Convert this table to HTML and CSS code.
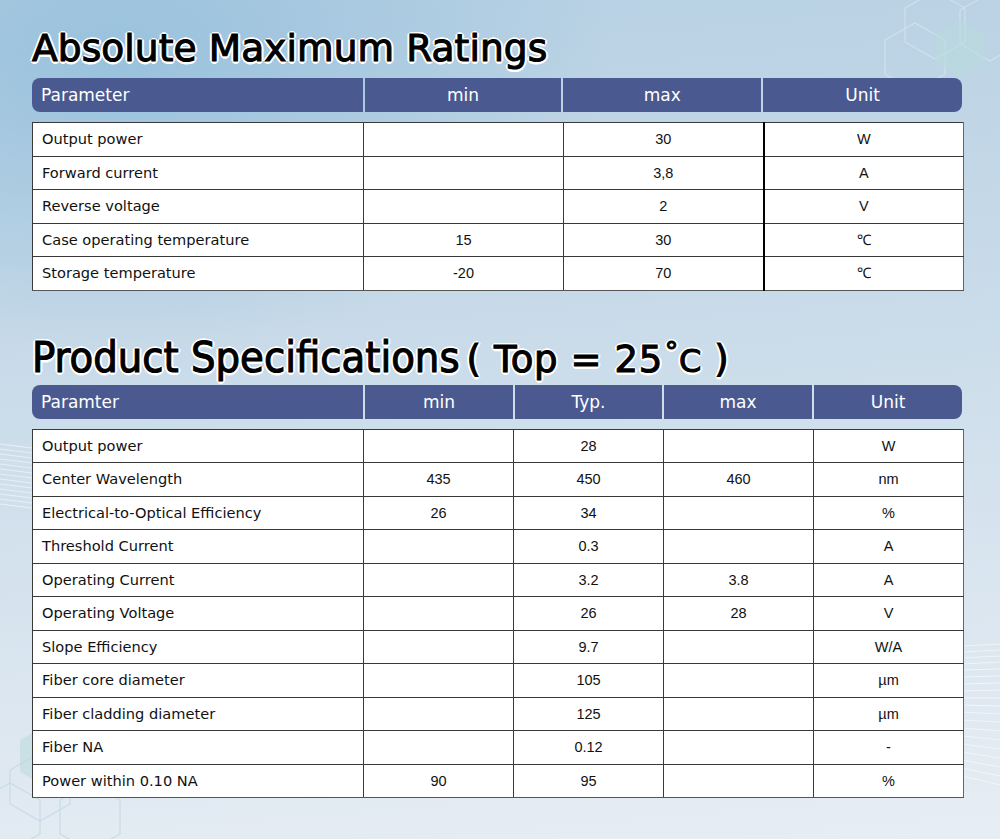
FILE: index.html
```html
<!DOCTYPE html>
<html>
<head>
<meta charset="utf-8">
<link rel="stylesheet" href="styles.css">
</head>
<body>
<svg class="deco" width="1000" height="839" viewBox="0 0 1000 839" aria-hidden="true">
  <g fill="none" stroke="#d5e5ed" stroke-width="1.1" opacity="0.85">
    <polygon points="905,8 935,-9 965,8 965,42 935,59 905,42"/>
    <polygon points="960,10 990,-7 1020,10 1020,44 990,61 960,44"/>
    <polygon points="885,40 915,23 945,40 945,74 915,91 885,74"/>
  </g>
  <g fill="none" stroke="#c5dbe4" stroke-width="1.2" opacity="0.9">
    <polygon points="10,770 40,753 70,770 70,804 40,821 10,804"/>
    <polygon points="60,800 90,783 120,800 120,834 90,851 60,834"/>
    <polygon points="-20,800 10,783 40,800 40,834 10,851 -20,834"/>
  </g>
  <polygon points="935,34 960,20 985,34 985,62 960,76 935,62" fill="#b8dadc" opacity="0.55"/>
  <polygon points="20,740 48,724 76,740 76,772 48,788 20,772" fill="#b4d8d8" opacity="0.45"/>
  <g stroke="#ffffff" stroke-width="1" opacity="0.55">
    <line x1="0" y1="444" x2="32" y2="448"/>
    <line x1="0" y1="449" x2="32" y2="453"/>
    <line x1="0" y1="454" x2="32" y2="458"/>
    <line x1="0" y1="459" x2="32" y2="463"/>
    <line x1="0" y1="464" x2="32" y2="468"/>
    <line x1="0" y1="469" x2="32" y2="473"/>
    <line x1="0" y1="474" x2="32" y2="478"/>
    <line x1="0" y1="479" x2="32" y2="483"/>
    <line x1="0" y1="484" x2="32" y2="488"/>
    <line x1="0" y1="489" x2="32" y2="493"/>
    <line x1="0" y1="494" x2="32" y2="498"/>
    <line x1="0" y1="499" x2="32" y2="503"/>
    <line x1="0" y1="504" x2="32" y2="508"/>
    <line x1="962" y1="646" x2="1000" y2="644"/>
    <line x1="962" y1="652" x2="1000" y2="650"/>
    <line x1="962" y1="658" x2="1000" y2="656"/>
    <line x1="962" y1="664" x2="1000" y2="662"/>
    <line x1="962" y1="670" x2="1000" y2="669"/>
    <line x1="962" y1="677" x2="1000" y2="676"/>
    <line x1="962" y1="684" x2="1000" y2="683"/>
    <line x1="962" y1="691" x2="1000" y2="690"/>
    <line x1="962" y1="698" x2="1000" y2="698"/>
    <line x1="962" y1="705" x2="1000" y2="706"/>
    <line x1="962" y1="712" x2="1000" y2="714"/>
    <line x1="962" y1="720" x2="1000" y2="722"/>
    <line x1="962" y1="728" x2="1000" y2="731"/>
    <line x1="962" y1="736" x2="1000" y2="740"/>
    <line x1="962" y1="744" x2="1000" y2="749"/>
    <line x1="962" y1="752" x2="1000" y2="758"/>
    <line x1="962" y1="760" x2="1000" y2="767"/>
    <line x1="962" y1="768" x2="1000" y2="776"/>
    <line x1="962" y1="776" x2="1000" y2="785"/>
  </g>
</svg>

<main class="page">
  <h1 class="title title-1">Absolute Maximum Ratings</h1>

  <div class="head head-4">
    <div class="hc hc-left">Parameter</div>
    <div class="hc">min</div>
    <div class="hc">max</div>
    <div class="hc hc-right">Unit</div>
  </div>

  <table class="grid grid-4">
    <colgroup><col class="c-param"><col class="c4"><col class="c4"><col class="c4"></colgroup>
    <tr><td>Output power</td><td></td><td class="num">30</td><td class="num unit-sep">W</td></tr>
    <tr><td>Forward current</td><td></td><td class="num">3,8</td><td class="num unit-sep">A</td></tr>
    <tr><td>Reverse voltage</td><td></td><td class="num">2</td><td class="num unit-sep">V</td></tr>
    <tr><td>Case operating temperature</td><td class="num">15</td><td class="num">30</td><td class="num unit-sep">℃</td></tr>
    <tr><td>Storage temperature</td><td class="num">-20</td><td class="num">70</td><td class="num unit-sep">℃</td></tr>
  </table>

  <h1 class="title title-2"><span class="cond">Product Specifications</span><span class="wide">( Top = 25<span class="deg">°</span><span class="cee">C</span> )</span></h1>

  <div class="head head-5">
    <div class="hc hc-left">Paramter</div>
    <div class="hc">min</div>
    <div class="hc">Typ.</div>
    <div class="hc">max</div>
    <div class="hc hc-right">Unit</div>
  </div>

  <table class="grid grid-5">
    <colgroup><col class="c-param"><col class="c5a"><col class="c5b"><col class="c5a"><col class="c5b"></colgroup>
    <tr><td>Output power</td><td></td><td class="num">28</td><td></td><td class="num">W</td></tr>
    <tr><td>Center Wavelength</td><td class="num">435</td><td class="num">450</td><td class="num">460</td><td class="num">nm</td></tr>
    <tr><td>Electrical-to-Optical Efficiency</td><td class="num">26</td><td class="num">34</td><td></td><td class="num">%</td></tr>
    <tr><td>Threshold Current</td><td></td><td class="num">0.3</td><td></td><td class="num">A</td></tr>
    <tr><td>Operating Current</td><td></td><td class="num">3.2</td><td class="num">3.8</td><td class="num">A</td></tr>
    <tr><td>Operating Voltage</td><td></td><td class="num">26</td><td class="num">28</td><td class="num">V</td></tr>
    <tr><td>Slope Efficiency</td><td></td><td class="num">9.7</td><td></td><td class="num">W/A</td></tr>
    <tr><td>Fiber core diameter</td><td></td><td class="num">105</td><td></td><td class="num">µm</td></tr>
    <tr><td>Fiber cladding diameter</td><td></td><td class="num">125</td><td></td><td class="num">µm</td></tr>
    <tr><td>Fiber NA</td><td></td><td class="num">0.12</td><td></td><td class="num">-</td></tr>
    <tr><td>Power within 0.10 NA</td><td class="num">90</td><td class="num">95</td><td></td><td class="num">%</td></tr>
  </table>
</main>
</body>
</html>
```

FILE: styles.css
```css
html, body {
  margin: 0;
  padding: 0;
}

body {
  width: 1000px;
  height: 839px;
  overflow: hidden;
  position: relative;
  background:
    radial-gradient(ellipse 700px 420px at 120px 60px, rgba(150, 192, 220, 0.9), rgba(150, 192, 220, 0) 70%),
    linear-gradient(175deg, #b6d0e3 0%, #c6d9e8 35%, #d6e3ee 65%, #e7edf4 100%);
  font-family: "DejaVu Sans", "Liberation Sans", sans-serif;
  color: #111;
}

.deco {
  position: absolute;
  left: 0;
  top: 0;
  z-index: 0;
}

.page {
  position: relative;
  z-index: 1;
  width: 930px;
  padding: 0 38px 0 32px;
}

.title {
  margin: 0;
  font-weight: normal;
  color: #000;
  -webkit-text-stroke: 1.1px #000;
  text-shadow:
    2px 0 0 #fff, -2px 0 0 #fff, 0 2px 0 #fff, 0 -2px 0 #fff,
    1.5px 1.5px 0 #fff, -1.5px 1.5px 0 #fff, 1.5px -1.5px 0 #fff, -1.5px -1.5px 0 #fff,
    2.5px 0 0 #fff, -2.5px 0 0 #fff, 0 2.5px 0 #fff, 0 -2.5px 0 #fff;
  white-space: nowrap;
}

.title-1 {
  font-size: 37.5px;
  line-height: 44px;
  padding-top: 26px;
  height: 52px;
  letter-spacing: 0.1px;
}

.title-2 {
  font-size: 43px;
  line-height: 48px;
  padding-top: 37px;
  height: 57px;
}

.title-2 .cond {
  font-family: "DejaVu Sans Condensed", "DejaVu Sans", sans-serif;
  letter-spacing: 0;
}

.title-2 .wide {
  font-size: 37px;
  letter-spacing: 0.6px;
  margin-left: 7px;
}

.title-2 .deg {
  font-size: 27px;
  vertical-align: 11px;
  margin-left: 2px;
}

.title-2 .cee {
  font-size: 32px;
}

.head {
  display: flex;
  gap: 2px;
  height: 34px;
  margin-bottom: 10px;
}

.hc {
  background: #4a5a91;
  color: #fff;
  font-size: 17px;
  line-height: 34px;
  text-align: center;
}

.hc-left {
  text-align: left;
  padding-left: 9px;
  border-radius: 8px 0 0 8px;
}

.hc-right {
  border-radius: 0 8px 8px 0;
}

.head-4 .hc-left { width: 322px; }
.head-4 .hc:nth-child(2) { width: 197px; }
.head-4 .hc:nth-child(3) { width: 198px; }
.head-4 .hc-right { width: 199px; }

.head-5 .hc-left { width: 322px; }
.head-5 .hc:nth-child(2) { width: 148px; }
.head-5 .hc:nth-child(3) { width: 147px; }
.head-5 .hc:nth-child(4) { width: 148px; }
.head-5 .hc-right { width: 148px; }

.grid {
  width: 931px;
  border-collapse: collapse;
  table-layout: fixed;
  background: #fff;
}

.grid td {
  border: 1px solid #3a3a3a;
  height: 32.5px;
  padding: 0 0 0 9px;
  font-size: 14.6px;
  line-height: 18px;
  color: #111;
  white-space: nowrap;
}

.grid td.num {
  padding: 0;
  text-align: center;
  font-family: "Liberation Sans", Arial, sans-serif;
  font-size: 14.5px;
}

.grid td.unit-sep {
  border-left: 2px solid #000;
}

.c-param { width: 331px; }
.c4 { width: 200px; }
.c5a { width: 150px; }
.c5b { width: 150px; }

.grid tr:last-child td { border-bottom-color: #555; }
.grid tr td:last-child { border-right-color: #666; }
```
